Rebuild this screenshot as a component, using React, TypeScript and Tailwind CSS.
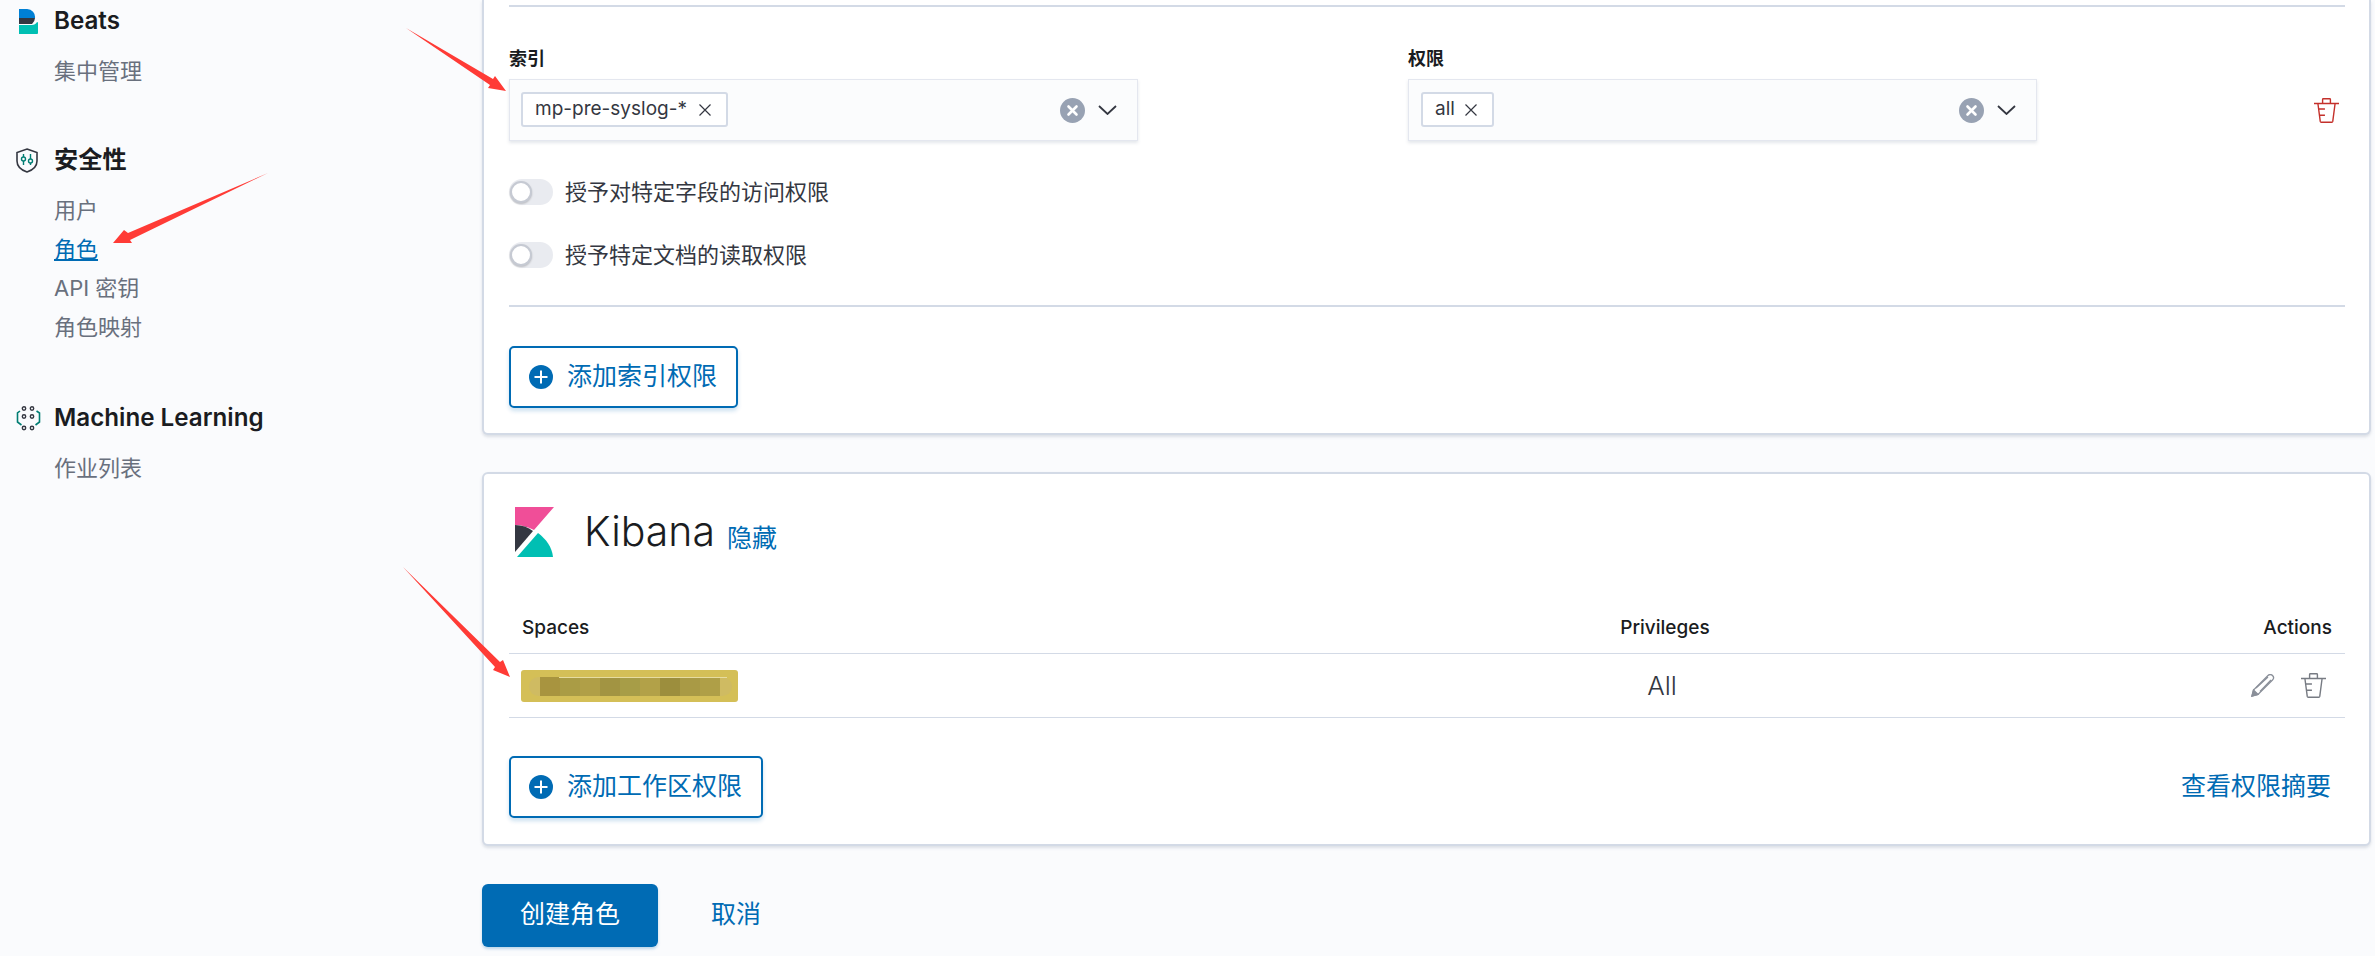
import React from "react";

const TrashIcon = ({ className }: { className: string }) => (
  <svg className={className} viewBox="0 0 16 16" fill="none" stroke="currentColor" strokeWidth={0.9}>
    <path d="M0 3.5h16M5.5 3.5V1a.5.5 0 0 1 .5-.5h4a.5.5 0 0 1 .5.5v2.5" />
    <path d="M2.5 3.5 4 15a.6.6 0 0 0 .6.5h6.8A.6.6 0 0 0 12 15l1.5-11.500" />
    <path d="M3 7h4M3.400 11H7" />
  </svg>
);

const ClearIcon = () => (
  <svg className="w-[25px] h-[25px]" viewBox="0 0 25 25">
    <circle cx="12.500" cy="12.500" r="12.500" fill="#98a2b3" />
    <path d="M8.500 8.500l8 8M16.500 8.500l-8 8" stroke="#fff" strokeWidth={2.600} strokeLinecap="round" />
  </svg>
);

const ComboBox = ({ value, pillWidth }: { value: string; pillWidth: string }) => (
  <div className="w-[629px] h-[62px] bg-[#fbfcfd] border border-[#e4e7ef] shadow-[0_2px_3px_rgba(152,162,179,0.25)] flex items-center pl-[11px] pr-[20px]">
    <div className={`${pillWidth} h-[35px] -mt-[1px] bg-white border-2 border-[#d3dae6] rounded-[3px] flex items-center justify-between pl-[12px] pr-[14px] text-[19px] text-[#343741]`}>
      <span>{value}</span>
      <svg className="w-[14px] h-[14px] text-[#343741]" viewBox="0 0 14 14" fill="none" stroke="currentColor" strokeWidth={1.200}>
        <path d="M1.500 1.500l11 11M12.500 1.500l-11 11" />
      </svg>
    </div>
    <div className="ml-auto flex items-center gap-[13px]">
      <ClearIcon />
      <svg className="w-[19px] h-[10px] text-[#343741]" viewBox="0 0 19 10" fill="none" stroke="currentColor" strokeWidth={1.800}>
        <path d="M1 1l8.500 8L18 1" />
      </svg>
    </div>
  </div>
);

const ToggleRow = ({ label }: { label: string }) => (
  <div className="flex items-center gap-[12px] h-[26px]">
    <div className="w-[44px] h-[26px] rounded-full bg-[#e9ebf0] relative">
      <div className="absolute left-[1px] top-[2px] w-[22px] h-[22px] rounded-full bg-white border-2 border-[#c6cad3] shadow-[0_1px_2px_rgba(0,0,0,0.2)]" />
    </div>
    <span className="text-[22px] leading-[26px] text-[#343741]">{label}</span>
  </div>
);

const AddButton = ({ label, width }: { label: string; width: string }) => (
  <button className={`${width} h-[62px] flex items-center gap-[14px] pl-[18px] bg-white border-2 border-[#006bb4] rounded-[5px] shadow-[0_3px_4px_rgba(0,107,180,0.2)] text-[25px] text-[#006bb4]`}>
    <svg className="w-[24px] h-[24px]" viewBox="0 0 24 24">
      <circle cx="12" cy="12" r="12" fill="#006bb4" />
      <path d="M12 5.500v13M5.500 12h13" stroke="#fff" strokeWidth={2} />
    </svg>
    {label}
  </button>
);

const NavSection = ({ icon, title, items, className }: { icon: React.ReactNode; title: string; items: string[]; className: string }) => (
  <div className={className}>
    <div className="flex items-center h-[30px]">
      <div className="w-[38px] flex items-center">{icon}</div>
      <span className="text-[24.2px] font-semibold text-[#1a1c21]">{title}</span>
    </div>
    <ul className="mt-4 pl-[38px]">
      {items.map((item) => (
        <li key={item} className="h-[39px] flex items-center text-[22px] text-[#69707d]">
          {item === "角色" ? <a className="text-[#006bb4] underline">{item}</a> : item}
        </li>
      ))}
    </ul>
  </div>
);

const blurBlocks = ["bg-[#a8943f]", "bg-[#aa9c45]", "bg-[#b09f47]", "bg-[#a29442]", "bg-[#a79d47]", "bg-[#b2a148]", "bg-[#9c8e3d]", "bg-[#a99a45]", "bg-[#af9f47]"];

export default function App() {
  return (
    <div className="relative h-[956px] overflow-hidden flex bg-[#fafbfd] font-[Inter,'Noto_Sans_CJK_SC',sans-serif]">
      {/* Sidebar */}
      <aside className="w-[482px] shrink-0 pl-[16px] pt-[6px]">
        <NavSection
          className=""
          title="Beats"
          items={["集中管理"]}
          icon={
            <svg className="ml-[3px] w-[19px] h-[25px]" viewBox="0 0 19 25">
              <path d="M0 0h8a8 8 0 0 1 8 9H0z" fill="#0080d5" />
              <path d="M0 9h16a8 8 0 0 1-3 6H0z" fill="#343741" />
              <path d="M0 16h13c2 0 4-1 5-3a6 6 0 0 1-5 12H0z" fill="#00bfb3" />
            </svg>
          }
        />
        <NavSection
          className="mt-[54px]"
          title="安全性"
          items={["用户", "角色", "API 密钥", "角色映射"]}
          icon={
            <svg className="w-[22px] h-[25px]" viewBox="0 0 22 25" fill="none">
              <path d="M11 1 21 4.500V13c0 5-4 9-10 11C5 22 1 18 1 13V4.500z" stroke="#343741" strokeWidth={1.600} />
              <path d="M7.500 6v3M7.500 13v4M14.500 6v5M14.500 15v2" stroke="#017d73" strokeWidth={1.400} />
              <circle cx="7.500" cy="11" r="2" stroke="#017d73" strokeWidth={1.400} />
              <circle cx="14.500" cy="13" r="2" stroke="#017d73" strokeWidth={1.400} />
            </svg>
          }
        />
        <NavSection
          className="mt-[56px]"
          title="Machine Learning"
          items={["作业列表"]}
          icon={
            <svg className="w-[25px] h-[25px]" viewBox="0 0 25 25" fill="none">
              <g stroke="#343741" strokeWidth={1.400}>
                <circle cx="8" cy="2.500" r="1.700" />
                <circle cx="16" cy="2.500" r="1.700" />
                <circle cx="8" cy="10.500" r="1.700" />
                <circle cx="16" cy="10.500" r="1.700" />
                <circle cx="8" cy="22" r="1.700" />
                <circle cx="16" cy="22" r="1.700" />
              </g>
              <path d="M4 5 1.500 7v9l4 3M20.500 5 23.500 7v9l-4 3" stroke="#017d73" strokeWidth={1.600} />
            </svg>
          }
        />
      </aside>

      {/* Main */}
      <main className="flex-1 flex flex-col pr-1">
        <section className="bg-white border-2 border-t-0 border-[#d3dae6] rounded-b-md shadow-[0_2px_3px_rgba(152,162,179,0.3)] pl-[25px] pr-[24px] pt-[5px] pb-[25px]">
          <div className="h-[2px] bg-[#d3dae6]" />
          <div className="mt-[40px] flex text-[18px] leading-[24px] font-bold text-[#1a1c21]">
            <span className="w-[899px]">索引</span>
            <span>权限</span>
          </div>
          <div className="mt-[8px] flex items-start">
            <ComboBox value="mp-pre-syslog-*" pillWidth="w-[207px]" />
            <div className="ml-[270px]">
              <ComboBox value="all" pillWidth="w-[73px] ml-[1px]" />
            </div>
            <TrashIcon className="ml-auto mr-[6px] mt-[19px] w-[25px] h-[25px] text-[#c4302b]" />
          </div>
          <div className="mt-[38px] flex flex-col gap-[37px]">
            <ToggleRow label="授予对特定字段的访问权限" />
            <ToggleRow label="授予特定文档的读取权限" />
          </div>
          <div className="mt-[37px] h-[2px] bg-[#d3dae6]" />
          <div className="mt-[39px]">
            <AddButton label="添加索引权限" width="w-[229px]" />
          </div>
        </section>

        <section className="mt-[37px] bg-white border-2 border-[#d3dae6] rounded-md shadow-[0_2px_3px_rgba(152,162,179,0.3)] pl-[25px] pr-[24px] pt-[32px] pb-[26px]">
          <div className="flex items-center">
            <svg className="ml-[6px] w-[39px] h-[50px]" viewBox="0 0 39 50">
              <path d="M0 0h39L19 23C13 20 7 18 0 18z" fill="#f04e98" />
              <path d="M0 18c7 0 13 2 18 6L0 45z" fill="#343741" />
              <path d="M2 50 23 26c8 6 14 14 15 24z" fill="#00bfb3" />
            </svg>
            <span className="ml-[30px] -mt-[2px] text-[41px] leading-[50px] font-light text-[#1a1c21]">Kibana</span>
            <a className="ml-[12px] mt-[14px] text-[25px] text-[#006bb4]">隐藏</a>
          </div>

          <div className="mt-[47px] h-[49px] grid grid-cols-[1032px_248px_1fr] items-center border-b border-[#d3dae6] text-[19px] font-medium text-[#1a1c21]">
            <span className="pl-[13px]">Spaces</span>
            <span className="text-center">Privileges</span>
            <span className="text-right pr-[13px]">Actions</span>
          </div>
          <div className="h-[64px] grid grid-cols-[1032px_248px_1fr] items-center border-b border-[#d3dae6]">
            <div className="relative ml-[12px] mt-[2px] w-[217px] h-[32px] rounded-[3px] bg-[#d4bf57] flex items-center pl-[8px]">
              <div className="w-[203px] h-[19px] rounded-full bg-[#cfbb62] flex pl-[11px]">
                {blurBlocks.map((tone, i) => (
                  <div key={i} className={`w-[20px] h-full ${tone}`} />
                ))}
              </div>
              <div className="absolute left-[38px] top-[7px] w-[168px] h-[1px] bg-[#e6dca0]" />
            </div>
            <span className="text-center pr-[6px] text-[26px] font-light text-[#343741]">All</span>
            <div className="flex justify-end items-center gap-[26px] pr-[19px]">
              <svg className="w-[24px] h-[23px] text-[#8a8f99]" viewBox="0 0 24 23" fill="none" stroke="currentColor" strokeWidth={1.300}>
                <path d="M1 22 2.500 16 17 1.500a2.500 2.500 0 0 1 4.500 4.500L7 20.500z" />
                <path d="M5 14 17 3M9 17.500 20 6" />
                <path d="M1 22 2.500 16 7 20.500z" fill="currentColor" />
              </svg>
              <TrashIcon className="w-[25px] h-[25px] text-[#777b83]" />
            </div>
          </div>

          <div className="mt-[38px] flex items-center justify-between">
            <AddButton label="添加工作区权限" width="w-[254px]" />
            <a className="pr-[14px] text-[25px] text-[#006bb4]">查看权限摘要</a>
          </div>
        </section>

        <div className="mt-[38px] flex items-center">
          <button className="w-[176px] h-[63px] rounded-md bg-[#006bb4] shadow-[0_2px_3px_rgba(0,107,180,0.25)] text-[25px] text-white">创建角色</button>
          <a className="ml-[53px] text-[25px] text-[#006bb4]">取消</a>
        </div>
      </main>

      {/* Annotation arrows */}
      <svg className="absolute left-0 top-0 w-[2375px] h-[956px] pointer-events-none" viewBox="0 0 2375 956" fill="#ff3b36">
        <polygon points="406,28 493,79 495,76 506,91 488,88 490,85" />
        <polygon points="268,173 128,233 124,230 113,243 132,243 130,240" />
        <polygon points="403,567 500,662 503,660 510,677 493,670 495,667" />
      </svg>
    </div>
  );
}
